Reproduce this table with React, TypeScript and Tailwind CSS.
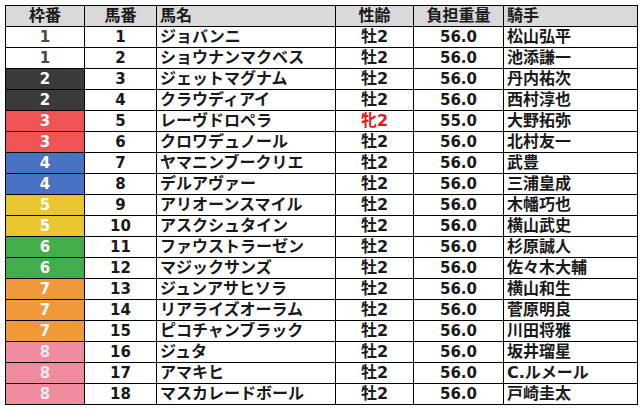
type Row = {
  waku: number;
  uma: number;
  name: string;
  sex: string;
  weight: string;
  jockey: string;
};

const rows: Row[] = [
  { waku: 1, uma: 1, name: "ジョバンニ", sex: "牡2", weight: "56.0", jockey: "松山弘平" },
  { waku: 1, uma: 2, name: "ショウナンマクベス", sex: "牡2", weight: "56.0", jockey: "池添謙一" },
  { waku: 2, uma: 3, name: "ジェットマグナム", sex: "牡2", weight: "56.0", jockey: "丹内祐次" },
  { waku: 2, uma: 4, name: "クラウディアイ", sex: "牡2", weight: "56.0", jockey: "西村淳也" },
  { waku: 3, uma: 5, name: "レーヴドロペラ", sex: "牝2", weight: "55.0", jockey: "大野拓弥" },
  { waku: 3, uma: 6, name: "クロワデュノール", sex: "牡2", weight: "56.0", jockey: "北村友一" },
  { waku: 4, uma: 7, name: "ヤマニンブークリエ", sex: "牡2", weight: "56.0", jockey: "武豊" },
  { waku: 4, uma: 8, name: "デルアヴァー", sex: "牡2", weight: "56.0", jockey: "三浦皇成" },
  { waku: 5, uma: 9, name: "アリオーンスマイル", sex: "牡2", weight: "56.0", jockey: "木幡巧也" },
  { waku: 5, uma: 10, name: "アスクシュタイン", sex: "牡2", weight: "56.0", jockey: "横山武史" },
  { waku: 6, uma: 11, name: "ファウストラーゼン", sex: "牡2", weight: "56.0", jockey: "杉原誠人" },
  { waku: 6, uma: 12, name: "マジックサンズ", sex: "牡2", weight: "56.0", jockey: "佐々木大輔" },
  { waku: 7, uma: 13, name: "ジュンアサヒソラ", sex: "牡2", weight: "56.0", jockey: "横山和生" },
  { waku: 7, uma: 14, name: "リアライズオーラム", sex: "牡2", weight: "56.0", jockey: "菅原明良" },
  { waku: 7, uma: 15, name: "ピコチャンブラック", sex: "牡2", weight: "56.0", jockey: "川田将雅" },
  { waku: 8, uma: 16, name: "ジュタ", sex: "牡2", weight: "56.0", jockey: "坂井瑠星" },
  { waku: 8, uma: 17, name: "アマキヒ", sex: "牡2", weight: "56.0", jockey: "C.ルメール" },
  { waku: 8, uma: 18, name: "マスカレードボール", sex: "牡2", weight: "56.0", jockey: "戸崎圭太" },
];

const wakuStyle: Record<number, string> = {
  1: "bg-white text-[#4a4a4a]",
  2: "bg-[#3a3a3a] text-white",
  3: "bg-[#ee5454] text-white",
  4: "bg-[#4a72c2] text-white",
  5: "bg-[#e9c62e] text-white",
  6: "bg-[#43ad4b] text-white",
  7: "bg-[#f0993a] text-white",
  8: "bg-[#ee8c9d] text-[#fbe8ec]",
};

const cell = "border border-black h-[21px] p-0 leading-[20px]";

export default function App() {
  return (
    <div className="w-[643px] h-[410px] bg-white pl-[5px] pt-[5px] font-['DejaVu_Sans','Noto_Sans_CJK_JP',sans-serif] font-bold text-[15px] text-[#1a1a1a]">
      <table className="border-collapse table-fixed w-[632px]">
        <colgroup>
          <col className="w-[79px]" />
          <col className="w-[72px]" />
          <col className="w-[179px]" />
          <col className="w-[78px]" />
          <col className="w-[90px]" />
          <col className="w-[134px]" />
        </colgroup>
        <thead>
          <tr className="bg-[#d9d9d9] text-[16px]">
            <th className={`${cell} text-center`}>枠番</th>
            <th className={`${cell} text-center`}>馬番</th>
            <th className={`${cell} text-left pl-[3px]`}>馬名</th>
            <th className={`${cell} text-center`}>性齢</th>
            <th className={`${cell} text-center`}>負担重量</th>
            <th className={`${cell} text-left pl-[3px]`}>騎手</th>
          </tr>
        </thead>
        <tbody>
          {rows.map((r) => (
            <tr key={r.uma}>
              <td className={`${cell} text-center ${wakuStyle[r.waku]}`}>{r.waku}</td>
              <td className={`${cell} text-center`}>{r.uma}</td>
              <td className={`${cell} text-left pl-[3px] text-[16px] whitespace-nowrap`}>{r.name}</td>
              <td className={`${cell} text-center text-[16px] ${r.sex === "牝2" ? "text-[#e8171b]" : ""}`}>
                {r.sex}
              </td>
              <td className={`${cell} text-center`}>{r.weight}</td>
              <td className={`${cell} text-left pl-[3px] text-[16px] whitespace-nowrap`}>{r.jockey}</td>
            </tr>
          ))}
        </tbody>
      </table>
    </div>
  );
}
